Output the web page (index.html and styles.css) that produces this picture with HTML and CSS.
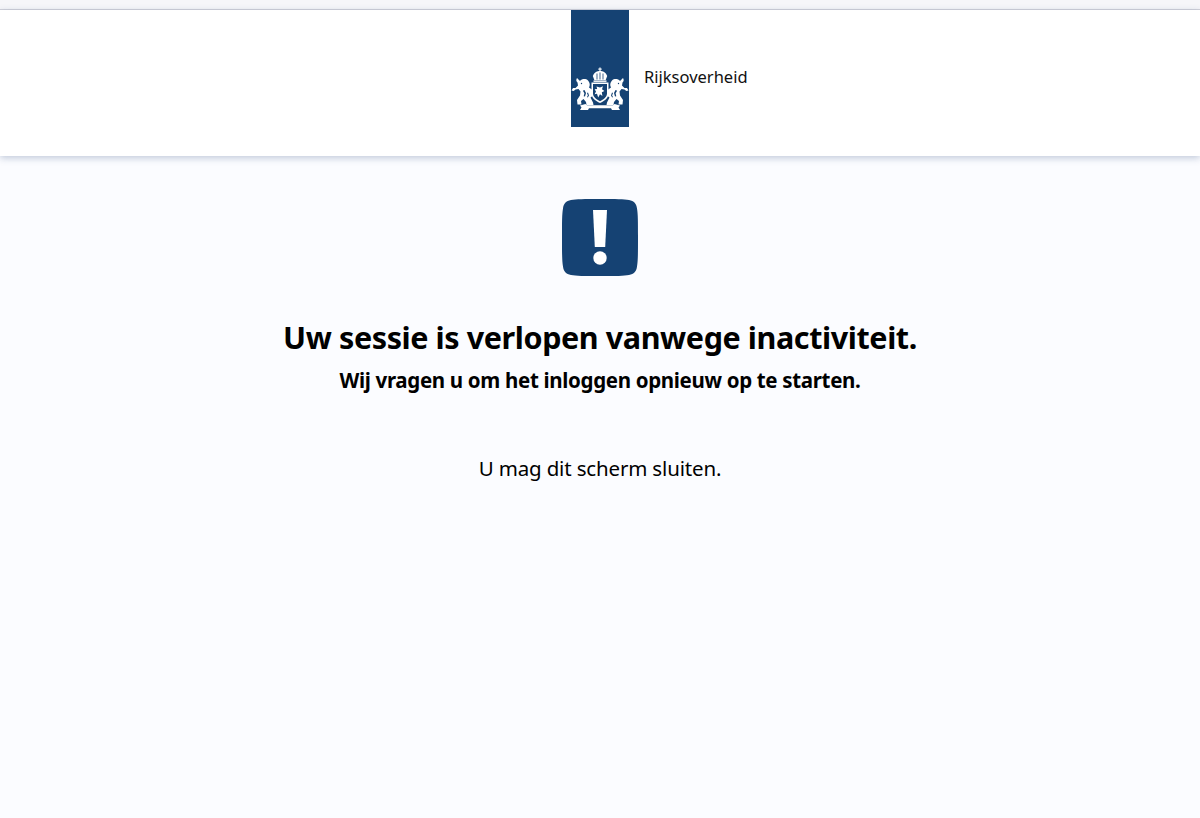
FILE: index.html
```html
<!DOCTYPE html>
<html lang="nl">
<head>
  <meta charset="UTF-8" />
  <title>Sessie verlopen</title>
  <meta name="viewport" content="width=device-width, initial-scale=1.0" />
  <link rel="stylesheet" href="styles.css">
</head>
<body>

<div class="topstrip"></div>

<header>
  <div class="spacer"></div>
  <div class="logo">
    <svg width="58" height="48" viewBox="0 0 58 48" fill="#fff">
      <defs>
        <g id="lion">
          <path d="M9 15c2-2.500 6-2.500 8-.5 2 2 2.300 5 1 7l3.500 2.500v6l-2 1.500 2.500 5 .5 2.500h-7l-.5-3-2.500-3-2.500 2 .5 3.500h-4l-.5-4.500 3-4.500.5-4-2-2.500-3 .5-1.800 1.500-2.200-.5 1.500-2.500h2.500l2.500-2.500-.5-3c-1.500-1-1.500-3-.5-4.500z"/>
          <path d="M13.500 24l1.500 3-1 3.500-1.300-.3.700-3-1.500-2.500zM17 26.500l1 3-1.200 2-.8-.6.900-1.500-.9-2.500z" fill="#154273"/>
          <circle cx="10.500" cy="17.500" r=".7" fill="#154273"/>
        </g>
      </defs>
      <!-- crown -->
      <rect x="28.400" y="1.500" width="1.200" height="4"/>
      <rect x="27.200" y="2.600" width="3.600" height="1"/>
      <path d="M21.800 10c1.500-4 4.500-5 7.200-5s5.700 1 7.200 5l-1.500 4h-11.400z"/>
      <rect x="22.500" y="14.400" width="13" height="1.500"/>
      <path d="M25.600 7.500h.8v6h-.8zM28.600 6.500h.8v7h-.8zM31.600 7.500h.8v6h-.8z" fill="#154273"/>
      <!-- lions either side -->
      <use href="#lion"/>
      <use href="#lion" transform="translate(58 0) scale(-1 1)"/>
      <!-- shield -->
      <path d="M20.500 16.500h17v11c0 4.500-4 7.500-8.500 9.500-4.500-2-8.500-5-8.500-9.500z"/>
      <path d="M22 18h14v9.500c0 3.500-3.500 6-7 7.700-3.500-1.700-7-4.200-7-7.700z" fill="#154273"/>
      <path d="M25.500 20.500l3.500 1 3-1.200-1 3 2.400 1.700-2.600 1.200.6 3.800-2.400-1.700-1.800 3.200-1.200-3.800-2.400.6 1.400-2.800-1.400-2.200 2.600-.4z"/>
      <!-- ribbon -->
      <path d="M9 39.500l5.500-1.500 1.500 1.200h26l1.500-1.200 5.500 1.500-1.500 2 1.500 2.500h-8l-1-1.800h-22l-1 1.800h-8l1.500-2.500z"/>
    </svg>
  </div>
  <div class="wordmark">Rijksoverheid</div>
</header>

<main>
  <svg class="alert" width="76" height="77" viewBox="0 0 76 77">
    <path d="M38 0C54 0 62 0 67 1 72 2 74.500 4.500 75 9.500 76 15 76 23 76 38.500 76 54 76 62 75 67.500 74.500 72.500 72 75 67 76 62 77 54 77 38 77 22 77 14 77 9 76 4 75 1.500 72.500 1 67.500 0 62 0 54 0 38.500 0 23 0 15 1 9.500 1.500 4.500 4 2 9 1 14 0 22 0 38 0z" fill="#154273"/>
    <path d="M31 11h14l-1.800 37h-10.400z" fill="#fff"/>
    <circle cx="38" cy="59" r="6.700" fill="#fff"/>
  </svg>
  <h1>Uw sessie is verlopen vanwege inactiviteit.</h1>
  <h2>Wij vragen u om het inloggen opnieuw op te starten.</h2>
  <p>U mag dit scherm sluiten.</p>
</main>

</body>
</html>
```

FILE: styles.css
```css
body {
  font-family: "Noto Sans", sans-serif;
  background-color: #fbfcff;
  color: #000;
  margin: 0;
  padding: 0;
}

.topstrip {
  height: 9px;
  background-color: #f6f6f9;
  border-bottom: 1px solid #d2d2da;
}

header {
  display: grid;
  grid-template-columns: 1fr 58px 1fr;
  height: 146px;
  background-color: #fff;
  box-shadow: 0 2px 7px rgba(40,70,120,0.28);
}

.logo {
  display: flex;
  align-items: flex-end;
  height: 117px;
  padding-bottom: 13px;
  box-sizing: border-box;
  background-color: #154273;
}

.wordmark {
  padding: 56px 0 0 15px;
  font-size: 16.500px;
  line-height: 21px;
  color: #111;
}

main {
  display: flex;
  flex-direction: column;
  align-items: center;
  padding-top: 43px;
}

h1 {
  margin: 40px 0 0;
  font-size: 30.500px;
  line-height: 42px;
  letter-spacing: -0.4px;
  font-weight: 700;
}

h2 {
  margin: 6px 0 0;
  font-size: 20.500px;
  line-height: 32px;
  letter-spacing: -0.33px;
  font-weight: 700;
}

p {
  margin: 56px 0 0;
  font-size: 20.500px;
  line-height: 32px;
  letter-spacing: -0.16px;
}
```
